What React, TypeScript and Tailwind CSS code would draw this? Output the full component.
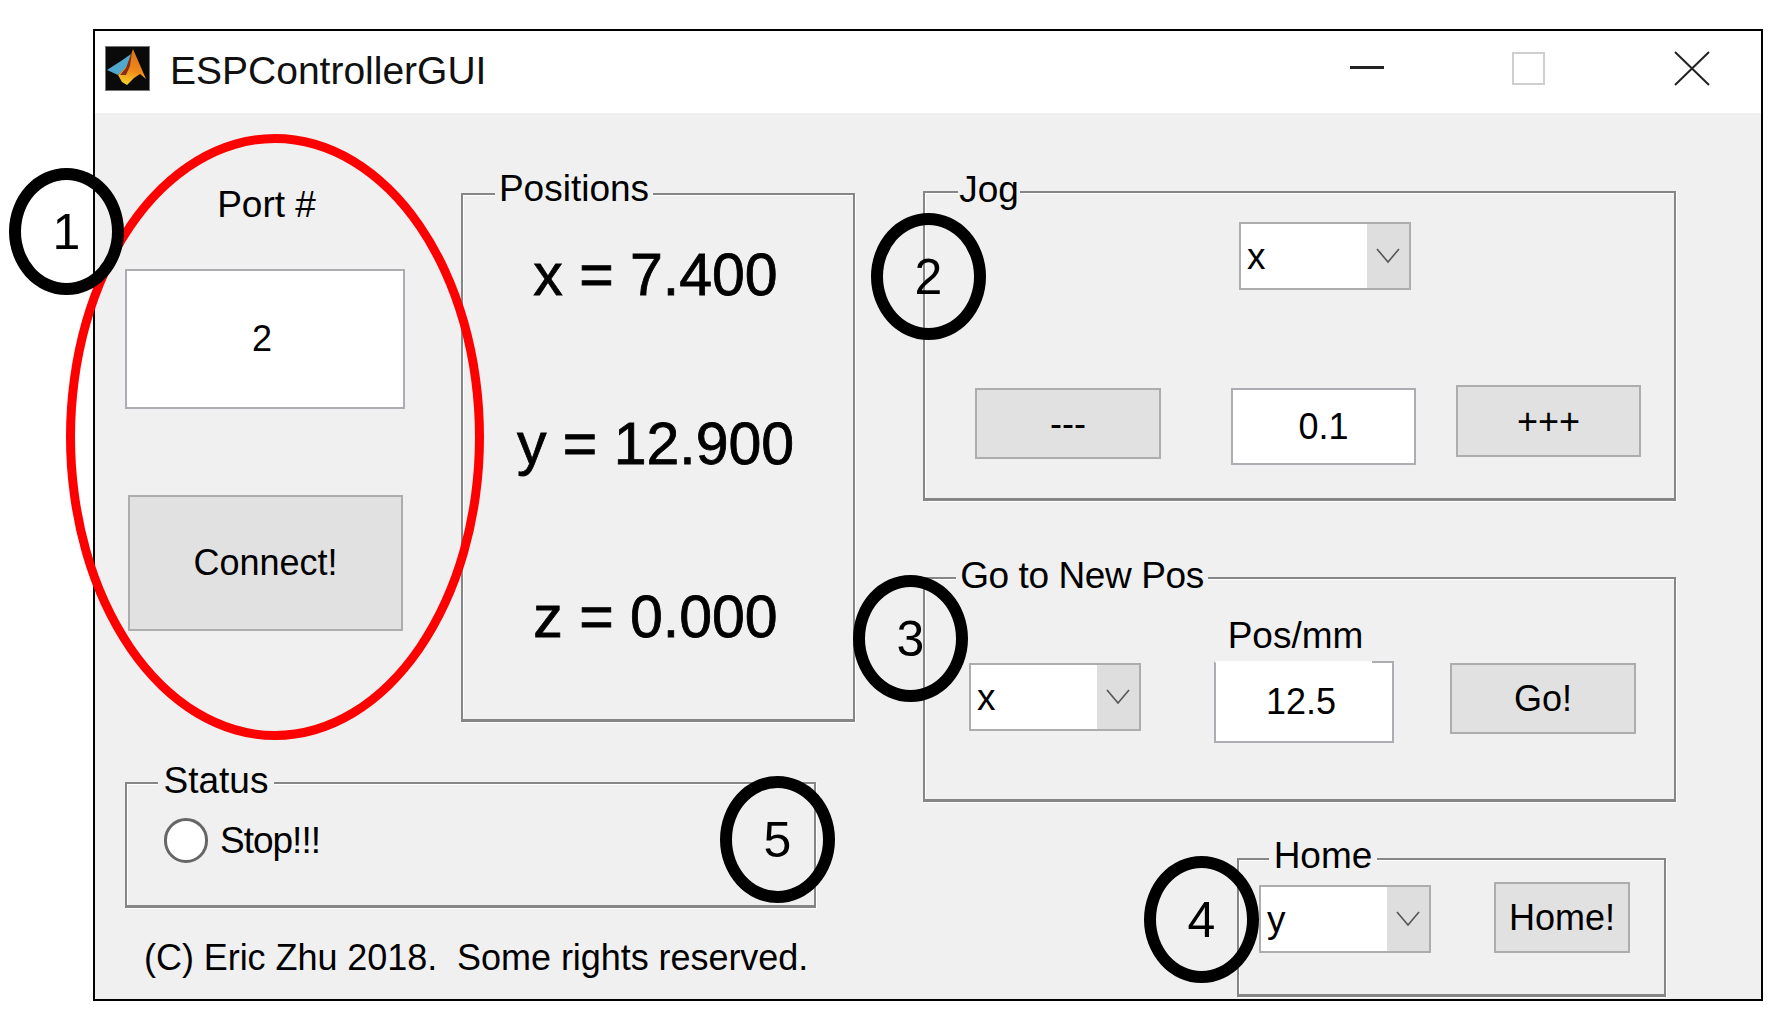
const buttonClass =
  'flex items-center justify-center bg-[#e1e1e1] border-2 border-[#adadad] text-[36px] leading-none text-black'
const editClass =
  'flex items-center justify-center bg-white border-2 border-[#abadb3] text-[36px] leading-none text-black'

function Panel({
  title,
  legendClass,
  className,
  children,
}: {
  title: string
  legendClass: string
  className: string
  children: React.ReactNode
}) {
  return (
    <div
      className={`relative border-2 border-b-[3px] border-[#868686] shadow-[inset_1px_1px_0_#fff,1px_1px_0_#fff] ${className}`}
    >
      {/* Legend sits on the top edge of the frame */}
      <span
        className={`absolute h-[44px] bg-[#f0f0f0] text-center text-[37px] leading-[44px] text-black ${legendClass}`}
      >
        {title}
      </span>
      {children}
    </div>
  )
}

function Dropdown({ value, className }: { value: string; className?: string }) {
  return (
    <div className={`flex w-[172px] h-[68px] bg-white border-2 border-[#adadad] ${className ?? ''}`}>
      <span className="flex-1 flex items-center pl-[6px] text-[37px] leading-none text-black">{value}</span>
      <span className="flex w-[42px] items-center justify-center bg-[#dedede]">
        <svg width="24" height="16" viewBox="0 0 24 16" fill="none" stroke="#555" strokeWidth="1.6">
          <path d="M1 1 L12 14 L23 1" />
        </svg>
      </span>
    </div>
  )
}

function MatlabIcon() {
  return (
    <svg width="45" height="45" viewBox="0 0 45 45" className="shrink-0">
      <defs>
        <linearGradient id="peak" x1="0.6" y1="0" x2="0.4" y2="1">
          <stop offset="0" stopColor="#d8701c" />
          <stop offset="0.6" stopColor="#f08a1a" />
          <stop offset="1" stopColor="#f7d02c" />
        </linearGradient>
      </defs>
      <rect x="0.5" y="0.5" width="44" height="44" fill="#0a0a0a" stroke="#777" />
      <path d="M2 24 L16 15 L26 8 L22 21 L13 29 Z" fill="#4fa9cf" />
      <path d="M28 3 L41 33 L35 28 L29 32 L22 39 L17 36 L13 29 L22 20 Z" fill="url(#peak)" />
      <path d="M27 6 L21 22 L15 29 L21 29 L25 20 Z" fill="#8a2c14" />
    </svg>
  )
}

function Marker({ n, className }: { n: number; className: string }) {
  return (
    <div
      className={`absolute flex w-[115px] h-[127px] items-center justify-center rounded-[50%] border-[12px] border-black text-[50px] leading-none text-black ${className}`}
    >
      {n}
    </div>
  )
}

export default function App() {
  return (
    <div className="relative w-[1778px] h-[1019px] overflow-hidden bg-white pl-[93px] pt-[29px] font-['Liberation_Sans',Arial,sans-serif]">
      <div className="flex flex-col w-[1670px] h-[972px] border-2 border-black">
        {/* Title bar */}
        <div className="flex h-[82px] shrink-0 items-start bg-white pl-[10px] pt-[15px]">
          <MatlabIcon />
          <span className="ml-[20px] mt-[1px] text-[39px] leading-[48px] text-[#111]">ESPControllerGUI</span>
          <div className="ml-auto flex items-start">
            <div className="mt-[20px] w-[34px] h-[3px] bg-[#222]" />
            <div className="ml-[128px] mt-[6px] w-[33px] h-[33px] border-2 border-[#cfcfcf]" />
            <svg width="36" height="35" viewBox="0 0 36 35" className="ml-[129px] mt-[5px] mr-[51px]" fill="none" stroke="#222" strokeWidth="2">
              <path d="M1 1 L35 34 M35 1 L1 34" />
            </svg>
          </div>
        </div>

        {/* Figure body */}
        <div className="flex flex-1 bg-[#f0f0f0] pl-[30px] text-black">
          <div className="flex flex-col w-[734px] shrink-0">
            <div className="flex pt-[80px]">
              <div className="flex flex-col w-[280px] shrink-0 -mt-[10px]">
                <div className="h-[44px] text-center text-[37px] leading-[44px] pl-[3px]">Port #</div>
                <div className={`${editClass} mt-[42px] h-[140px] pr-[6px]`}>2</div>
                <div className={`${buttonClass} ml-[3px] mt-[86px] w-[275px] h-[136px]`}>Connect!</div>
              </div>
              <Panel
                title="Positions"
                legendClass="-top-[28px] left-[32px] w-[158px]"
                className="ml-[56px] w-[394px] shrink-0 h-[529px] flex flex-col items-center pt-[48px] pr-[5px]"
              >
                <div className="h-[64px] text-[59px] leading-[64px] [-webkit-text-stroke:0.8px_black]">x = 7.400</div>
                <div className="mt-[105px] h-[64px] text-[59px] leading-[64px] [-webkit-text-stroke:0.8px_black]">y = 12.900</div>
                <div className="mt-[109px] h-[64px] text-[59px] leading-[64px] [-webkit-text-stroke:0.8px_black]">z = 0.000</div>
              </Panel>
            </div>

            <Panel
              title="Status"
              legendClass="-top-[25px] left-[31px] w-[116px]"
              className="mt-[60px] w-[691px] h-[126px] flex items-start pl-[37px] pt-[34px]"
            >
              <div className="w-[44px] h-[45px] rounded-full bg-white border-[3px] border-[#666]" />
              <span className="ml-[12px] mt-[1px] text-[37px] leading-[44px] tracking-[-1px]">Stop!!!</span>
            </Panel>

            <div className="ml-[19px] mt-[28px] h-[44px] text-[36px] leading-[44px] tracking-[-0.05px] whitespace-pre">
              (C) Eric Zhu 2018.  Some rights reserved.
            </div>
          </div>

          <div className="flex flex-col ml-[64px] w-[753px] pt-[78px]">
            <Panel
              title="Jog"
              legendClass="-top-[25px] left-[33px] w-[62px]"
              className="h-[310px] pl-[50px] pt-[29px]"
            >
              <Dropdown value="x" className="ml-[264px]" />
              <div className="flex items-start mt-[95px]">
                <div className={`${buttonClass} mt-[3px] w-[186px] h-[71px]`}>---</div>
                <div className={`${editClass} ml-[70px] mt-[3px] w-[185px] h-[77px]`}>0.1</div>
                <div className={`${buttonClass} ml-[40px] w-[185px] h-[72px] pt-[2px]`}>+++</div>
              </div>
            </Panel>

            <Panel
              title="Go to New Pos"
              legendClass="-top-[25px] left-[31px] w-[252px] tracking-[-0.4px]"
              className="mt-[76px] h-[225px] flex items-start pl-[44px] pt-[35px]"
            >
              <Dropdown value="x" className="mt-[49px]" />
              <div className="flex flex-col ml-[73px] w-[180px]">
                <div className="h-[44px] pr-[17px] text-center text-[37px] leading-[44px]">Pos/mm</div>
                <div className="relative mt-[3px] flex h-[82px] items-center justify-center pr-[6px] border-2 border-t-transparent border-[#abadb3] bg-white text-[36px] leading-none">
                  <span className="absolute -top-[2px] -right-[2px] w-[22px] h-[2px] bg-[#abadb3]" />
                  12.5
                </div>
              </div>
              <div className={`${buttonClass} ml-[56px] mt-[49px] w-[186px] h-[71px]`}>Go!</div>
            </Panel>

            <Panel
              title="Home"
              legendClass="-top-[26px] left-[30px] w-[108px]"
              className="ml-[314px] mt-[56px] w-[429px] h-[139px] flex items-start pl-[20px] pt-[22px]"
            >
              <Dropdown value="y" className="mt-[3px]" />
              <div className={`${buttonClass} ml-[63px] w-[136px] h-[71px]`}>Home!</div>
            </Panel>
          </div>
        </div>
      </div>

      {/* Annotations drawn on top of the screenshot */}
      <div className="absolute left-[66px] top-[134px] w-[418px] h-[606px] rounded-[50%] border-[9px] border-[#ff0000]" />
      <Marker n={1} className="left-[9px] top-[168px]" />
      <Marker n={2} className="left-[871px] top-[213px]" />
      <Marker n={3} className="left-[853px] top-[575px]" />
      <Marker n={4} className="left-[1144px] top-[856px]" />
      <Marker n={5} className="left-[720px] top-[776px]" />
    </div>
  )
}
